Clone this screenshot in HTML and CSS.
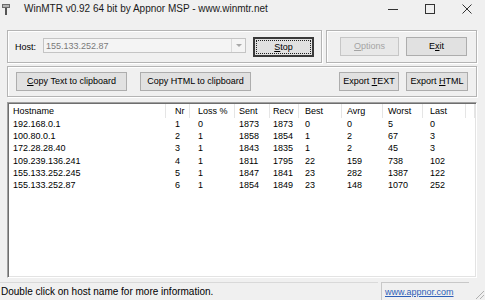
FILE: index.html
```html
<!DOCTYPE html>
<html lang="en">
<head>
    <meta charset="UTF-8">
    <title>WinMTR</title>
    <link rel="stylesheet" href="styles.css">
</head>
<body>
    <div class="window">
        <div class="titlebar">
            <svg class="app-icon" width="8" height="11" viewBox="0 0 8 11">
                <rect x="0" y="0" width="8" height="4" fill="#6a6a6a"/>
                <rect x="1" y="1" width="6" height="2" fill="#b4b4b4"/>
                <rect x="3" y="4" width="2" height="7" fill="#555"/>
            </svg>
            <span class="title">WinMTR v0.92 64 bit by Appnor MSP - www.winmtr.net</span>
            <div class="controls">
                <span class="ctl">
                    <svg width="10" height="10" viewBox="0 0 10 10"><path d="M0 5.5h10" stroke="#333" stroke-width="1"/></svg>
                </span>
                <span class="ctl">
                    <svg width="10" height="10" viewBox="0 0 10 10"><rect x="0.5" y="0.5" width="9" height="9" fill="none" stroke="#333" stroke-width="1"/></svg>
                </span>
                <span class="ctl">
                    <svg width="10" height="10" viewBox="0 0 10 10"><path d="M0.5 0.5l9 9M9.5 0.5l-9 9" stroke="#333" stroke-width="1"/></svg>
                </span>
            </div>
        </div>

        <div class="toolbar">
            <div class="group host-group">
                <span class="host-label">Host:</span>
                <div class="combo">
                    <span class="combo-text">155.133.252.87</span>
                    <span class="combo-arrow"></span>
                </div>
                <button class="btn btn-default"><span class="focus-rect"><u>S</u>top</span></button>
            </div>
            <div class="group action-group">
                <button class="btn btn-options" disabled><u>O</u>ptions</button>
                <button class="btn btn-exit">E<u>x</u>it</button>
            </div>
        </div>

        <div class="group export-group">
            <button class="btn btn-copy"><u>C</u>opy Text to clipboard</button>
            <button class="btn btn-copy btn-copy-html">Copy HTML to clipboard</button>
            <button class="btn btn-export btn-export-text">Export <u>T</u>EXT</button>
            <button class="btn btn-export btn-export-html">Export <u>H</u>TML</button>
        </div>

        <div class="list">
            <div class="row head">
                <span>Hostname</span><span>Nr</span><span>Loss %</span><span>Sent</span><span>Recv</span><span>Best</span><span>Avrg</span><span>Worst</span><span>Last</span><span></span>
            </div>
            <div class="row">
                <span>192.168.0.1</span><span>1</span><span>0</span><span>1873</span><span>1873</span><span>0</span><span>0</span><span>5</span><span>0</span><span></span>
            </div>
            <div class="row">
                <span>100.80.0.1</span><span>2</span><span>1</span><span>1858</span><span>1854</span><span>1</span><span>2</span><span>67</span><span>3</span><span></span>
            </div>
            <div class="row">
                <span>172.28.28.40</span><span>3</span><span>1</span><span>1843</span><span>1835</span><span>1</span><span>2</span><span>45</span><span>3</span><span></span>
            </div>
            <div class="row">
                <span>109.239.136.241</span><span>4</span><span>1</span><span>1811</span><span>1795</span><span>22</span><span>159</span><span>738</span><span>102</span><span></span>
            </div>
            <div class="row">
                <span>155.133.252.245</span><span>5</span><span>1</span><span>1847</span><span>1841</span><span>23</span><span>282</span><span>1387</span><span>122</span><span></span>
            </div>
            <div class="row">
                <span>155.133.252.87</span><span>6</span><span>1</span><span>1854</span><span>1849</span><span>23</span><span>148</span><span>1070</span><span>252</span><span></span>
            </div>
        </div>

        <div class="statusbar">
            <span class="status-text">Double click on host name for more information.</span>
            <span class="status-link"><a href="#">www.appnor.com</a></span>
            <span class="grip">
                <svg width="12" height="12" viewBox="0 0 12 12">
                    <path d="M11 3L3 11M11 7L7 11" stroke="#b0b0b0" stroke-width="1"/>
                </svg>
            </span>
        </div>
    </div>
</body>
</html>
```

FILE: styles.css
```css
* {
    margin: 0;
    padding: 0;
    box-sizing: border-box;
}

body {
    background-color: #f0f0f0;
    font-family: "Liberation Sans", Arial, sans-serif;
    font-size: 9px;
    color: #000;
    width: 485px;
    height: 300px;
    overflow: hidden;
}

.window {
    display: flex;
    flex-direction: column;
    height: 300px;
}

/* Title bar */
.titlebar {
    height: 17px;
    display: flex;
    align-items: center;
}

.app-icon {
    margin-left: 2px;
    margin-top: 1px;
}

.title {
    margin-left: 14px;
    font-size: 10px;
    color: #1a1a1a;
}

.controls {
    margin-left: auto;
    display: flex;
}

.ctl {
    width: 37px;
    height: 17px;
    display: flex;
    align-items: center;
    justify-content: center;
}

/* Group boxes */
.group {
    border: 1px solid #b4b4b4;
    box-shadow: inset 1px 1px 0 #fff, 1px 1px 0 #fff;
    display: flex;
    align-items: center;
}

.toolbar {
    display: flex;
    gap: 4px;
    margin: 13px 0 0 7px;
}

.host-group {
    width: 315px;
    height: 33px;
    padding-left: 7px;
}

.host-label {
    width: 28px;
}

.combo {
    width: 203px;
    height: 15px;
    margin-top: -2px;
    border: 1px solid #c4c4c4;
    background-color: #f4f4f4;
    display: flex;
    align-items: center;
}

.combo-text {
    flex-grow: 1;
    padding-left: 2px;
    color: #7a7a7a;
}

.combo-arrow {
    width: 14px;
    height: 13px;
    border-left: 1px solid #dadada;
    position: relative;
}

.combo-arrow:after {
    content: "";
    position: absolute;
    left: 4px;
    top: 5px;
    border-left: 3px solid transparent;
    border-right: 3px solid transparent;
    border-top: 3px solid #a8a8a8;
}

/* Buttons */
.btn {
    font-family: inherit;
    font-size: 9px;
    color: #000;
    background-color: #e1e1e1;
    border: 1px solid #adadad;
    height: 19px;
    line-height: 17px;
    text-align: center;
    white-space: nowrap;
}

.btn u {
    text-underline-offset: 1px;
}

.btn-default {
    width: 61px;
    height: 20px;
    margin-left: 7px;
    margin-top: 1px;
    border: 2px solid #3a3a3a;
    padding: 1px;
    display: flex;
}

.focus-rect {
    width: 100%;
    height: 100%;
    border: 1px dotted #222;
    line-height: 12px;
    text-align: center;
}

.action-group {
    width: 151px;
    height: 33px;
    padding-left: 13px;
    gap: 7px;
}

.btn-options {
    width: 59px;
    color: #a4a4a4;
    border-color: #c6c6c6;
    background-color: #e8e8e8;
}

.btn-exit {
    width: 61px;
}

.export-group {
    width: 470px;
    height: 31px;
    margin: 3px 0 0 7px;
    padding: 0 8px;
}

.btn-copy {
    width: 111px;
}

.btn-copy-html {
    margin-left: 13px;
}

.btn-export-text {
    width: 60px;
    margin-left: auto;
}

.btn-export-html {
    width: 62px;
    margin-left: 7px;
}

/* Host list */
.list {
    width: 470px;
    height: 176px;
    margin: 5px 0 0 7px;
    background-color: #fff;
    border-top: 1px solid #a0a0a0;
    border-left: 1px solid #a0a0a0;
    border-right: 1px solid #fff;
    border-bottom: 1px solid #fff;
    box-shadow: inset 1px 1px 0 #6e6e6e, inset -1px -1px 0 #e3e3e3;
    padding: 1px;
}

.row {
    display: grid;
    grid-template-columns: 157px 24px 45px 35px 29px 43px 41px 40px 43px 1fr;
    height: 12.2px;
    line-height: 12.2px;
    white-space: nowrap;
}

.row.head {
    height: 14px;
    line-height: 14px;
}

.row.head span {
    border-right: 1px solid #e5e5e5;
}

.row span:nth-child(1) { padding-left: 4px; }
.row span:nth-child(2) { padding-left: 9px; }
.row span:nth-child(3) { padding-left: 8px; }
.row span:nth-child(4) { padding-left: 4px; }
.row span:nth-child(5) { padding-left: 3px; }
.row span:nth-child(6) { padding-left: 6px; }
.row span:nth-child(7) { padding-left: 5px; }
.row span:nth-child(8) { padding-left: 5px; }
.row span:nth-child(9) { padding-left: 7px; }

/* Status bar */
.statusbar {
    margin-top: auto;
    height: 18px;
    display: flex;
    align-items: stretch;
    font-size: 10px;
}

.status-text {
    flex-grow: 1;
    padding-left: 1px;
    display: flex;
    align-items: center;
    border-top: 1px solid #d9d9d9;
}

.status-link {
    width: 88px;
    margin-left: 3px;
    border-top: 1px solid #c8c8c8;
    border-left: 1px solid #c8c8c8;
    padding-left: 3px;
    display: flex;
    align-items: center;
    font-size: 9px;
}

.status-link a {
    color: #2d5fb8;
}

.grip {
    width: 16px;
    display: flex;
    align-items: flex-end;
    justify-content: flex-end;
}
```
